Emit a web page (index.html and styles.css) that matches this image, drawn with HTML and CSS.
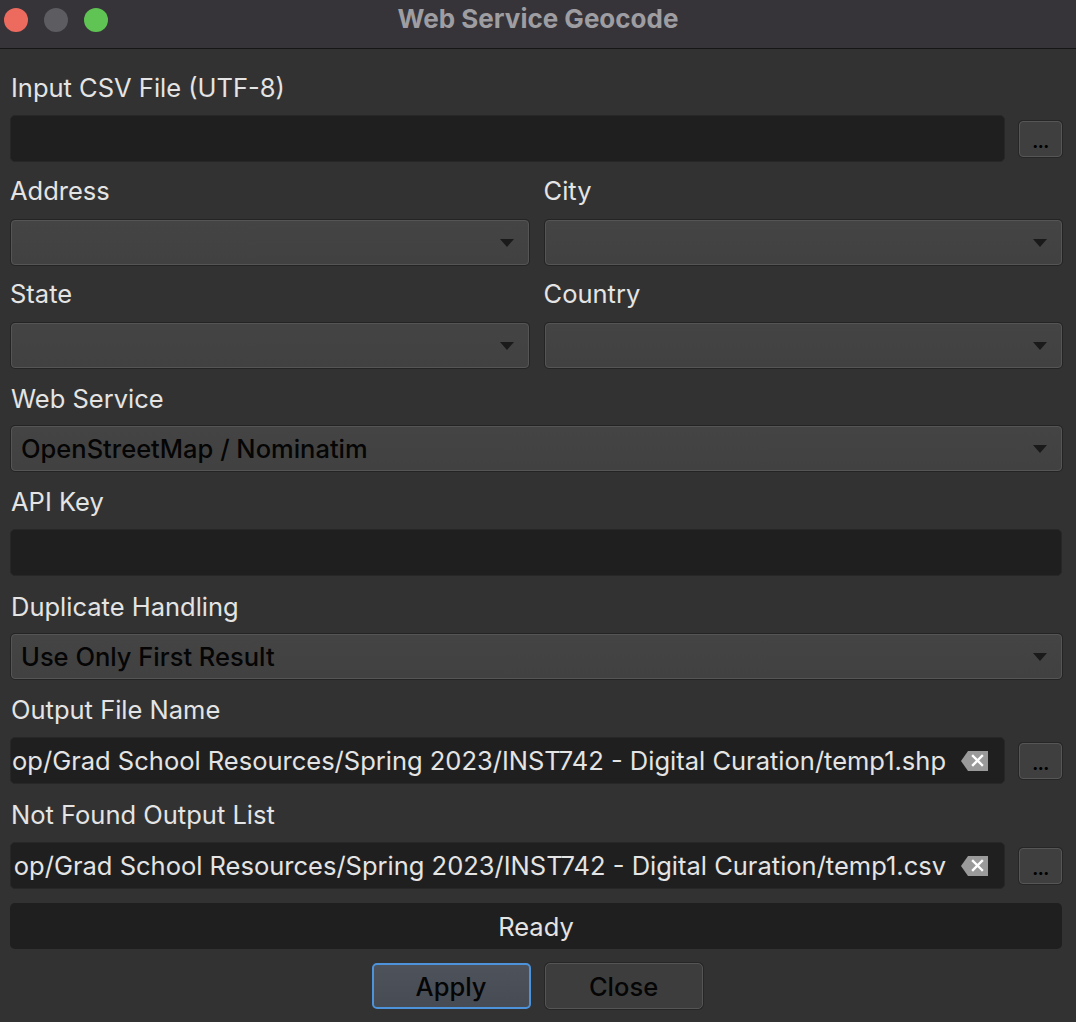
FILE: index.html
```html
<!DOCTYPE html>
<html>
<head>
<meta charset="utf-8">
<link rel="stylesheet" href="styles.css">
</head>
<body>
<div class="window">
  <div class="titlebar">
    <div class="lights">
      <span class="light red"></span>
      <span class="light gray"></span>
      <span class="light green"></span>
    </div>
    <div class="title">Web Service Geocode</div>
  </div>
  <div class="content">
    <div class="group">
      <div class="label">Input CSV File (UTF-8)</div>
      <div class="filerow">
        <div class="field"></div>
        <button class="dots">...</button>
      </div>
    </div>
    <div class="cols">
      <div class="group">
        <div class="label">Address</div>
        <div class="combo"><span class="arrow"></span></div>
      </div>
      <div class="group">
        <div class="label">City</div>
        <div class="combo"><span class="arrow"></span></div>
      </div>
    </div>
    <div class="cols">
      <div class="group">
        <div class="label">State</div>
        <div class="combo"><span class="arrow"></span></div>
      </div>
      <div class="group">
        <div class="label">Country</div>
        <div class="combo"><span class="arrow"></span></div>
      </div>
    </div>
    <div class="group">
      <div class="label">Web Service</div>
      <div class="combo"><span class="combo-text">OpenStreetMap / Nominatim</span><span class="arrow"></span></div>
    </div>
    <div class="group">
      <div class="label">API Key</div>
      <div class="field"></div>
    </div>
    <div class="group">
      <div class="label">Duplicate Handling</div>
      <div class="combo"><span class="combo-text">Use Only First Result</span><span class="arrow"></span></div>
    </div>
    <div class="group">
      <div class="label">Output File Name</div>
      <div class="filerow">
        <div class="field path">
          <div class="path-clip"><span class="path-text">op/Grad School Resources/Spring 2023/INST742 - Digital Curation/temp1.shp</span></div>
          <svg class="clear" width="27" height="20" viewBox="0 0 27 20"><path d="M0 10 L7 0 H27 V20 H7 Z" fill="#9a9a9a"/><path d="M12 5 L21 14 M21 5 L12 14" stroke="#ffffff" stroke-width="2.4" stroke-linecap="square"/></svg>
        </div>
        <button class="dots">...</button>
      </div>
    </div>
    <div class="group">
      <div class="label">Not Found Output List</div>
      <div class="filerow">
        <div class="field path">
          <div class="path-clip"><span class="path-text">op/Grad School Resources/Spring 2023/INST742 - Digital Curation/temp1.csv</span></div>
          <svg class="clear" width="27" height="20" viewBox="0 0 27 20"><path d="M0 10 L7 0 H27 V20 H7 Z" fill="#9a9a9a"/><path d="M12 5 L21 14 M21 5 L12 14" stroke="#ffffff" stroke-width="2.4" stroke-linecap="square"/></svg>
        </div>
        <button class="dots">...</button>
      </div>
    </div>
    <div class="status">Ready</div>
    <div class="buttons">
      <button class="btn primary">Apply</button>
      <button class="btn">Close</button>
    </div>
  </div>
</div>
</body>
</html>
```
FILE: styles.css
```css
* { box-sizing: border-box; }
html, body { margin: 0; padding: 0; background: #323232; }
body { font-family: Inter, "Noto Sans", "Liberation Sans", sans-serif; }
.window { width: 1076px; height: 1022px; background: #323232; overflow: hidden; }

.titlebar {
  height: 49px;
  background: #363439;
  border-bottom: 1px solid #161616;
  position: relative;
  display: flex;
  align-items: center;
  justify-content: center;
}
.lights {
  position: absolute;
  left: 4px;
  top: 8px;
  display: flex;
  gap: 16px;
}
.light { width: 24px; height: 24px; border-radius: 50%; display: block; }
.light.red { background: #ed6a5e; }
.light.gray { background: #5d5c60; }
.light.green { background: #5fc454; }
.title {
  font-weight: 700;
  font-size: 26px;
  color: #9e9da1;
  margin-top: -11px;
  letter-spacing: 0;
}

.content {
  padding: 23px 14px 0 10px;
  display: flex;
  flex-direction: column;
  gap: 15px;
}
.group { display: flex; flex-direction: column; }
.label {
  height: 32px;
  line-height: 32px;
  margin-bottom: 11px;
  font-size: 25.5px;
  color: #e4e4e4;
  padding-left: 1px;
}
.cols { display: grid; grid-template-columns: 1fr 1fr; column-gap: 15px; }
.cols .label { margin-top: -2px; margin-bottom: 13px; padding-left: 0; }

.filerow { display: flex; align-items: center; gap: 14px; }
.filerow .field { flex: 1; }
.field {
  height: 47px;
  background: #1f1f1f;
  border: 1px solid #272727;
  border-radius: 5px;
}
.dots {
  width: 43px;
  height: 36px;
  padding: 0 0 5px 0;
  background: #3f3f3f;
  border: 1px solid #565656;
  box-shadow: 0 0 0 1px #262626;
  border-radius: 4px;
  color: #000;
  font-family: Inter, "Noto Sans", sans-serif;
  font-size: 17px;
  font-weight: 800;
  letter-spacing: -0.5px;
  line-height: 1;
  display: flex;
  align-items: flex-end;
  justify-content: center;
}

.combo {
  height: 45px;
  margin-left: 1px;
  background: linear-gradient(#444444, #414141);
  border: 1px solid #555555;
  box-shadow: 0 0 0 1px #242424;
  border-radius: 4px;
  display: flex;
  align-items: center;
  padding: 0 14px 0 9px;
}
.combo-text {
  flex: 1;
  font-size: 25.5px;
  font-weight: 500;
  color: #050505;
}
.arrow {
  margin-left: auto;
  width: 0;
  height: 0;
  border-left: 7px solid transparent;
  border-right: 7px solid transparent;
  border-top: 8px solid #1a1a1a;
}

.path {
  display: flex;
  align-items: center;
  padding: 0 16px 0 0;
  overflow: hidden;
}
.path-clip {
  flex: 1;
  min-width: 0;
  overflow: hidden;
  display: flex;
  justify-content: flex-end;
  margin-right: 15px;
}
.path-text {
  flex-shrink: 0;
  white-space: nowrap;
  font-size: 25.5px;
  color: #e4e4e4;
}
.clear { flex-shrink: 0; }

.status {
  height: 46px;
  background: #1f1f1f;
  border-radius: 5px;
  display: flex;
  align-items: center;
  justify-content: center;
  font-size: 25.5px;
  color: #e4e4e4;
  margin-top: -1px;
}

.buttons {
  display: flex;
  justify-content: center;
  gap: 14px;
  margin-top: -1px;
  padding-left: 2px;
}
.btn {
  width: 158px;
  height: 46px;
  border-radius: 5px;
  font-family: Inter, "Noto Sans", sans-serif;
  font-size: 25.5px;
  font-weight: 500;
  color: #050505;
  background: #3d3d3d;
  border: 1px solid #555555;
  box-shadow: 0 0 0 1px #262626;
  padding: 0;
}
.btn.primary {
  width: 159px;
  background: linear-gradient(#4d525b, #474c54);
  border: 2px solid #4d93dc;
  box-shadow: none;
}
```
